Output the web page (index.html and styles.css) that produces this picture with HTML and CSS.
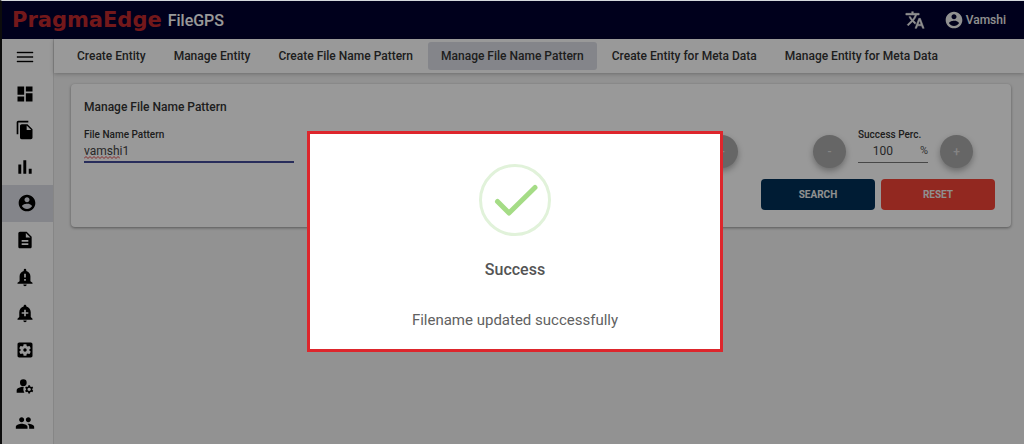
FILE: index.html
```html
<!DOCTYPE html>
<html lang="en">
<head>
<meta charset="utf-8">
<title>FileGPS</title>
<link rel="stylesheet" href="styles.css">
</head>
<body>
<div class="app">
  <header class="topbar">
    <a class="brand" href="#"><span class="brand-logo">PragmaEdge</span><span class="brand-product">FileGPS</span></a>
    <div class="topbar-actions">
      <button class="bar-button" type="button" aria-label="Language">
        <svg class="icon icon-20" viewBox="0 0 24 24"><path d="M12.87 15.07l-2.54-2.51.03-.03A17.52 17.52 0 0 0 14.07 6H17V4h-7V2H8v2H1v2h11.17C11.5 7.92 10.44 9.75 9 11.35 8.07 10.32 7.3 9.19 6.69 8h-2c.73 1.63 1.73 3.17 2.98 4.56l-5.09 5.02L4 19l5-5 3.11 3.11.76-2.04zM18.5 10h-2L12 22h2l1.12-3h4.75L21 22h2l-4.5-12zm-2.62 7l1.62-4.33L19.12 17h-3.24z" stroke="currentColor" stroke-width=".6"/></svg>
      </button>
      <button class="bar-button" type="button">
        <svg class="icon icon-20" viewBox="0 0 24 24"><path d="M12 2C6.48 2 2 6.48 2 12s4.48 10 10 10 10-4.48 10-10S17.52 2 12 2zm0 3c1.66 0 3 1.34 3 3s-1.34 3-3 3-3-1.34-3-3 1.34-3 3-3zm0 14.2c-2.5 0-4.71-1.28-6-3.22.03-1.99 4-3.08 6-3.08 1.99 0 5.97 1.09 6 3.08-1.29 1.94-3.5 3.22-6 3.22z"/></svg>
        <span>Vamshi</span>
      </button>
    </div>
  </header>
  <div class="body">
    <nav class="sidebar" aria-label="Main">
      <button class="side-item" type="button" aria-label="Menu"><svg class="icon icon-18" viewBox="0 0 18 18"><path d="M1 4h16v1H1zM1 8.500h16v1H1zM1 13h16v1H1z" stroke="currentColor" stroke-width=".4"/></svg></button>
      <a class="side-item" href="#" aria-label="Dashboard"><svg class="icon icon-20" viewBox="0 0 24 24"><path d="M3 13h8V3H3v10zm0 8h8v-6H3v6zm10 0h8V11h-8v10zm0-18v6h8V3h-8z"/></svg></a>
      <a class="side-item" href="#" aria-label="Files"><svg class="icon icon-20" viewBox="0 0 24 24"><path d="M16 1H4c-1.100 0-2 .9-2 2v14h2V3h12V1zm-1 4l6 6v10c0 1.100-.9 2-2 2H7.990C6.890 23 6 22.100 6 21l.01-14c0-1.100.89-2 1.990-2h7zm-1 7h5.500L14 6.500V12z"/></svg></a>
      <a class="side-item" href="#" aria-label="Reports"><svg class="icon icon-20" viewBox="0 0 24 24"><path d="M4 9h3.500v11H4zM16.500 14H20v6h-3.500zM10 4h3.500v16H10z"/></svg></a>
      <a class="side-item side-item-active" href="#" aria-label="Entity"><svg class="icon icon-20" viewBox="0 0 24 24"><path d="M12 2C6.480 2 2 6.480 2 12s4.480 10 10 10 10-4.480 10-10S17.520 2 12 2zm0 3c1.660 0 3 1.340 3 3s-1.340 3-3 3-3-1.340-3-3 1.340-3 3-3zm0 14.200c-2.500 0-4.710-1.280-6-3.220.03-1.990 4-3.080 6-3.080 1.990 0 5.970 1.090 6 3.080-1.290 1.940-3.500 3.220-6 3.220z"/></svg></a>
      <a class="side-item" href="#" aria-label="Documents"><svg class="icon icon-20" viewBox="0 0 24 24"><path d="M14 2H6c-1.100 0-1.990.9-1.990 2L4 20c0 1.100.89 2 1.990 2H18c1.100 0 2-.9 2-2V8l-6-6zm2 16H8v-2h8v2zm0-4H8v-2h8v2zm-3-5V3.500L18.500 9H13z"/></svg></a>
      <a class="side-item" href="#" aria-label="Alerts"><svg class="icon icon-20" viewBox="0 0 24 24"><path fill-rule="evenodd" d="M18.500 17v-6c0-3.070-2-5.640-5-6.320V3.500a1.500 1.500 0 0 0-3 0v1.180C7.500 5.360 5.500 7.920 5.500 11v6L3 19v1h18v-1l-2.500-2zM13 16.500h-2v-2h2v2zm0-4h-2V8h2v4.500zM12 23c1.100 0 2-.9 2-2h-4c0 1.100.9 2 2 2z"/></svg></a>
      <a class="side-item" href="#" aria-label="Add alert"><svg class="icon icon-20" viewBox="0 0 24 24"><path d="M10.010 21.010c0 1.100.88 1.990 1.990 1.990s1.990-.89 1.990-1.990h-3.980zm8.870-4.190V11c0-3.250-2.250-5.970-5.290-6.690v-.72C13.590 2.710 12.880 2 12 2s-1.590.71-1.590 1.590v.72C7.370 5.030 5.120 7.750 5.120 11v5.820L3 18.940V20h18v-1.060l-2.120-2.120zM16 13.010h-3v3h-2v-3H8V11h3V8h2v3h3v2.010z"/></svg></a>
      <a class="side-item" href="#" aria-label="Settings"><svg class="icon icon-20" viewBox="0 0 24 24"><path d="M12 10c-1.100 0-2 .9-2 2s.9 2 2 2 2-.9 2-2-.9-2-2-2zm7-7H5c-1.110 0-2 .9-2 2v14c0 1.100.89 2 2 2h14c1.110 0 2-.9 2-2V5c0-1.100-.89-2-2-2zm-1.750 9c0 .23-.02.46-.05.68l1.480 1.160c.13.11.17.3.08.45l-1.400 2.420c-.09.15-.27.21-.43.15l-1.740-.7c-.36.28-.76.51-1.180.69l-.26 1.850c-.03.17-.18.3-.35.3h-2.800c-.17 0-.32-.13-.35-.29l-.26-1.850c-.43-.18-.82-.41-1.180-.69l-1.740.7c-.16.06-.34 0-.43-.15l-1.400-2.420c-.09-.15-.05-.34.08-.45l1.480-1.160c-.03-.23-.05-.46-.05-.69 0-.23.02-.46.05-.68l-1.480-1.160c-.13-.11-.17-.3-.08-.45l1.400-2.420c.09-.15.27-.21.43-.15l1.740.7c.36-.28.76-.51 1.180-.69l.26-1.850c.03-.17.18-.3.35-.3h2.800c.17 0 .32.13.35.29l.26 1.850c.43.18.82.41 1.180.69l1.740-.7c.16-.06.34 0 .43.15l1.400 2.420c.09.15.05.34-.08.45l-1.480 1.160c.03.23.05.46.05.69z"/></svg></a>
      <a class="side-item" href="#" aria-label="Manage account"><svg class="icon icon-20" viewBox="0 0 24 24"><circle cx="10" cy="8" r="4"/><path d="M10.670 13.020C10.450 13.010 10.230 13 10 13c-2.420 0-4.680.67-6.610 1.820C2.510 15.340 2 16.320 2 17.350V20h9.260A6.960 6.960 0 0 1 10 16c0-1.070.25-2.070.67-2.980zM20.750 16c0-.22-.03-.42-.06-.63l1.140-1.010-1-1.730-1.450.49c-.32-.27-.68-.48-1.080-.63L18 11h-2l-.3 1.490c-.4.15-.76.36-1.080.63l-1.450-.49-1 1.730 1.140 1.010c-.03.21-.06.41-.06.63s.03.42.06.63l-1.140 1.010 1 1.730 1.450-.49c.32.27.68.48 1.080.63L16 21h2l.3-1.490c.4-.15.76-.36 1.080-.63l1.450.49 1-1.730-1.140-1.010c.03-.21.06-.41.06-.63zM17 18c-1.100 0-2-.9-2-2s.9-2 2-2 2 .9 2 2-.9 2-2 2z"/></svg></a>
      <a class="side-item" href="#" aria-label="Users"><svg class="icon icon-20" viewBox="0 0 24 24"><path d="M16 11c1.660 0 2.990-1.340 2.990-3S17.660 5 16 5s-3 1.340-3 3 1.340 3 3 3zm-8 0c1.660 0 2.990-1.340 2.990-3S9.660 5 8 5 5 6.340 5 8s1.340 3 3 3zm0 2c-2.330 0-7 1.170-7 3.500V19h14v-2.500c0-2.330-4.670-3.500-7-3.500zm8 0c-.29 0-.62.02-.97.05 1.160.84 1.970 1.970 1.970 3.450V19h6v-2.500c0-2.330-4.670-3.500-7-3.500z"/></svg></a>
    </nav>
    <div class="content">
      <nav class="tabs" aria-label="Entity pages">
        <a class="tab" href="#">Create Entity</a>
        <a class="tab" href="#">Manage Entity</a>
        <a class="tab" href="#">Create File Name Pattern</a>
        <a class="tab tab-active" href="#" aria-current="page">Manage File Name Pattern</a>
        <a class="tab" href="#">Create Entity for Meta Data</a>
        <a class="tab" href="#">Manage Entity for Meta Data</a>
      </nav>
      <main class="card">
        <h1 class="card-title">Manage File Name Pattern</h1>
        <form class="form">
          <div class="field">
            <label class="label" for="pattern">File Name Pattern</label>
            <div class="input-wrap">
              <input class="text-input" id="pattern" type="text" value="vamshi1" spellcheck="false">
              <svg class="squiggle" viewBox="0 0 36 3" aria-hidden="true"><path d="M0 2.500l2-2 2 2 2-2 2 2 2-2 2 2 2-2 2 2 2-2 2 2 2-2 2 2 2-2 2 2 2-2 2 2 2-2 2 2"/></svg>
            </div>
          </div>
          <div class="stepper stepper-middle">
            <button class="round" type="button">+</button>
          </div>
          <div class="stepper stepper-last">
            <button class="round" type="button">-</button>
            <div class="percent">
              <label class="label" for="success">Success Perc.</label>
              <div class="percent-row">
                <input class="percent-input" id="success" type="text" value="100">
                <span class="unit">%</span>
              </div>
            </div>
            <button class="round" type="button">+</button>
          </div>
          <div class="actions">
            <button class="button button-search" type="button">SEARCH</button>
            <button class="button button-reset" type="button">RESET</button>
          </div>
        </form>
      </main>
    </div>
  </div>
  <div class="backdrop">
    <section class="dialog" role="dialog" aria-modal="true" aria-labelledby="dialog-title">
      <svg class="check" viewBox="0 0 72 72" aria-hidden="true"><circle cx="36" cy="36" r="34.500"/><path d="M18.500 37.500L30 49 56 23.500"/></svg>
      <h2 class="dialog-title" id="dialog-title">Success</h2>
      <p class="dialog-text">Filename updated successfully</p>
    </section>
  </div>
</div>
</body>
</html>
```
FILE: styles.css
```css
* {
  box-sizing: border-box;
}

body {
  margin: 0;
  font-family: Roboto, "Liberation Sans", sans-serif;
  font-size: 14px;
  color: #333;
}

button,
input {
  font: inherit;
  color: inherit;
}

a {
  color: inherit;
  text-decoration: none;
}

.app {
  position: relative;
  display: flex;
  flex-direction: column;
  min-height: 100vh;
  border-top: 1px solid #d4d8dc;
  border-left: 2px solid #0c0c0c;
  background: #f3f3f3;
}

.topbar {
  display: flex;
  align-items: center;
  justify-content: space-between;
  height: 38px;
  padding: 0 18px 0 10px;
  background: #00002f;
  color: #fff;
}

.brand {
  display: flex;
  align-items: center;
  gap: 6px;
}

.brand-logo {
  font: bold 21px/24px "DejaVu Sans", sans-serif;
  color: #c0282c;
}

.brand-product {
  font-size: 16px;
  font-weight: 500;
}

.topbar-actions {
  display: flex;
  gap: 19px;
}

.bar-button {
  display: flex;
  align-items: center;
  gap: 2px;
  padding: 0;
  border: 0;
  background: none;
  color: #f0f0f0;
  font-size: 12px;
  font-weight: 500;
}

.icon {
  display: block;
  fill: currentColor;
}

.icon-18 {
  width: 18px;
  height: 18px;
}

.icon-20 {
  width: 20px;
  height: 20px;
}

.body {
  display: flex;
  flex: 1;
}

.sidebar {
  display: flex;
  flex-direction: column;
  width: 52px;
  padding-bottom: 3px;
  background: #fff;
  border-right: 1px solid #e0e0e0;
}

.side-item {
  display: flex;
  flex: 1;
  align-items: center;
  justify-content: center;
  padding: 0 5px 0 0;
  border: 0;
  background: none;
  color: #000;
}

.side-item-active {
  background: #dcdee6;
  padding: 0 1px 0 0;
}

.content {
  flex: 1;
  min-width: 0;
}

.tabs {
  display: flex;
  gap: 2px;
  height: 34px;
  padding: 3px 10px;
  background: #fff;
  box-shadow: 0 1px 4px rgba(0, 0, 0, 0.25);
}

.tab {
  padding: 0 13px;
  border-radius: 3px;
  font-size: 12px;
  font-weight: 500;
  line-height: 28px;
  white-space: nowrap;
}

.tab-active {
  background: #dcdee6;
}

.card {
  margin: 11px 13px 0 17px;
  padding: 16px 16px 17px 13px;
  border-radius: 4px;
  background: #fff;
  box-shadow: 0 1px 3px rgba(0, 0, 0, 0.4);
}

.card-title {
  margin: 0 0 13px;
  font-size: 12px;
  font-weight: 500;
  line-height: 14px;
}

.form {
  display: grid;
  grid-template-columns: 23% 49% 28%;
  row-gap: 11px;
}

.label {
  display: block;
  font-size: 10px;
  font-weight: 500;
  line-height: 16px;
  white-space: nowrap;
}

.input-wrap {
  position: relative;
  border-bottom: 2px solid #444c98;
}

.text-input {
  display: block;
  width: 100%;
  height: 18px;
  padding: 0 0 2px;
  border: 0;
  outline: 0;
  background: none;
  font-size: 12px;
  color: #444;
}

.squiggle {
  position: absolute;
  left: 0;
  bottom: 2px;
  width: 36px;
  height: 3px;
  fill: none;
  stroke: #e04848;
  stroke-width: 1;
}

.stepper {
  display: flex;
  align-items: flex-start;
  justify-content: flex-end;
  gap: 12px;
}

.stepper-middle {
  padding-right: 2px;
}

.stepper-last {
  padding-right: 22px;
}

.round {
  width: 33px;
  height: 33px;
  margin-top: 8px;
  padding: 0;
  border: 0;
  border-radius: 50%;
  background: #aaa;
  color: #ddd;
  font-size: 12px;
  font-weight: 500;
  box-shadow: 0 3px 6px rgba(0, 0, 0, 0.3);
}

.percent {
  width: 70px;
}

.percent-row {
  display: flex;
  border-bottom: 1px solid #777;
}

.percent-input {
  width: 50px;
  height: 19px;
  padding: 0 0 3px;
  border: 0;
  background: none;
  font-size: 12px;
  text-align: center;
  color: #444;
}

.unit {
  flex: 1;
  font-size: 11px;
  line-height: 16px;
  text-align: right;
  color: #555;
}

.actions {
  display: flex;
  grid-column: 1 / -1;
  justify-content: flex-end;
  gap: 6px;
}

.button {
  width: 114px;
  height: 31px;
  border: 0;
  border-radius: 4px;
  color: #f0f0f0;
  font-size: 10px;
  font-weight: 700;
}

.button-search {
  background: #003058;
}

.button-reset {
  background: #f44336;
}

.backdrop {
  position: absolute;
  inset: 0;
  display: flex;
  align-items: flex-start;
  justify-content: center;
  padding: 130px 0 0 4px;
  background: rgba(0, 0, 0, 0.4);
}

.dialog {
  display: flex;
  flex-direction: column;
  align-items: center;
  width: 416px;
  padding: 30px 20px 19px;
  border: 3px solid #dd262c;
  background: #fff;
}

.check {
  width: 72px;
  height: 72px;
  fill: none;
}

.check circle {
  stroke: #e1f2da;
  stroke-width: 3;
}

.check path {
  stroke: #a5dc86;
  stroke-width: 5;
  stroke-linecap: round;
  stroke-linejoin: round;
}

.dialog-title {
  margin: 24px 0 30px;
  font-size: 16px;
  font-weight: 500;
  line-height: 20px;
  color: #545454;
}

.dialog-text {
  margin: 0;
  font-size: 15px;
  line-height: 20px;
  color: #616161;
}
```
